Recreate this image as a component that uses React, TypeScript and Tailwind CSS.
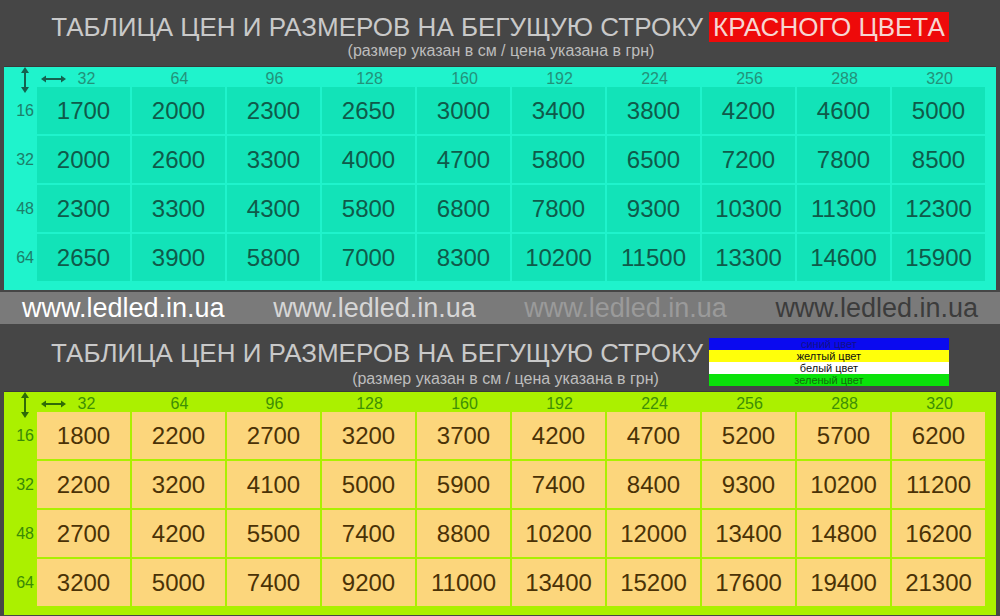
import React from "react";

// column widths (cm) shared by both tables
const WIDTHS = [32, 64, 96, 128, 160, 192, 224, 256, 288, 320];
const HEIGHTS = [16, 32, 48, 64];

const RED_PRICES = [
  [1700, 2000, 2300, 2650, 3000, 3400, 3800, 4200, 4600, 5000],
  [2000, 2600, 3300, 4000, 4700, 5800, 6500, 7200, 7800, 8500],
  [2300, 3300, 4300, 5800, 6800, 7800, 9300, 10300, 11300, 12300],
  [2650, 3900, 5800, 7000, 8300, 10200, 11500, 13300, 14600, 15900],
];

const COLOR_PRICES = [
  [1800, 2200, 2700, 3200, 3700, 4200, 4700, 5200, 5700, 6200],
  [2200, 3200, 4100, 5000, 5900, 7400, 8400, 9300, 10200, 11200],
  [2700, 4200, 5500, 7400, 8800, 10200, 12000, 13400, 14800, 16200],
  [3200, 5000, 7400, 9200, 11000, 13400, 15200, 17600, 19400, 21300],
];

type Theme = {
  outer: string;
  cell: string;
  head: string;
  label: string;
  value: string;
  arrow: string;
};

const CYAN: Theme = {
  outer: "bg-[#1ff3cc]",
  cell: "bg-[#12e3b8]",
  head: "text-[#22927a]",
  label: "text-[#1c7f6a]",
  value: "text-[#0f5a4a]",
  arrow: "#15614f",
};

const LIME: Theme = {
  outer: "bg-[#abf000]",
  cell: "bg-[#fcd67c]",
  head: "text-[#3d8f05]",
  label: "text-[#3a8a06]",
  value: "text-[#4a3206]",
  arrow: "#2f6a08",
};

// small double arrows in the top-left corner
const Arrows = ({ color }: { color: string }) => (
  <div className="relative h-full">
    <svg className="absolute left-[16px] top-[0px]" width="10" height="26" viewBox="0 0 10 26">
      <line x1="5" y1="3" x2="5" y2="23" stroke={color} strokeWidth="2" />
      <path d="M1 6 L5 0 L9 6 Z" fill={color} />
      <path d="M1 20 L5 26 L9 20 Z" fill={color} />
    </svg>
    <svg className="absolute left-[37px] top-[8px]" width="25" height="8" viewBox="0 0 25 8">
      <line x1="3" y1="4" x2="22" y2="4" stroke={color} strokeWidth="2" />
      <path d="M5 0.5 L0 4 L5 7.5 Z" fill={color} />
      <path d="M20 0.5 L25 4 L20 7.5 Z" fill={color} />
    </svg>
  </div>
);

const PriceTable = ({ prices, theme }: { prices: number[][]; theme: Theme }) => (
  <div className="px-[4px]">
    <div className={`${theme.outer} border-t-[1px] border-[#3a3a3a] pr-[7px] pb-[9px]`}>
      <div className="grid grid-cols-[33px_repeat(10,95px)] grid-rows-[18px_repeat(4,47px)] gap-y-[2px]">
        <Arrows color={theme.arrow} />
        {WIDTHS.map((w, i) => (
          <div
            key={w}
            className={`flex items-end justify-center text-[16px] leading-none translate-y-[2px] ${theme.head} ${i === 0 ? "pl-[4px]" : ""}`}
          >
            {w}
          </div>
        ))}
        {prices.map((row, r) => (
          <React.Fragment key={r}>
            <div className={`flex items-center justify-end pr-[3px] text-[16px] ${theme.label}`}>
              {HEIGHTS[r]}
            </div>
            {row.map((p, c) => (
              <div
                key={c}
                className={`${theme.cell} mr-[2px] flex items-center justify-center text-[24px] ${theme.value}`}
              >
                {p}
              </div>
            ))}
          </React.Fragment>
        ))}
      </div>
    </div>
  </div>
);

const TITLE = "ТАБЛИЦА ЦЕН И РАЗМЕРОВ НА БЕГУЩУЮ СТРОКУ";
const SUBTITLE = "(размер указан в см / цена указана в грн)";

const App = () => {
  return (
    <div
      className="w-[1000px] h-[616px] overflow-hidden bg-[#464646]"
      style={{ fontFamily: '"Liberation Sans", Arial, sans-serif' }}
    >
      {/* red colour header */}
      <div className="h-[66px] flex flex-col items-center pt-[12px]">
        <div className="flex items-center text-[26px] leading-[30px] text-[#c9c9c9]">
          <span>{TITLE}</span>
          <span className="ml-[6px] bg-[#ee0a0a] px-[4px] text-[#f6d6d2]">КРАСНОГО ЦВЕТА</span>
        </div>
        <div className="text-[16px] leading-[18px] text-[#bdbdbd] ml-[2px]">{SUBTITLE}</div>
      </div>

      <PriceTable prices={RED_PRICES} theme={CYAN} />

      {/* site band */}
      <div className="mt-[2px] h-[32px] bg-[#7a7a7a] flex items-center justify-between px-[22px] text-[27px] leading-none">
        <span className="text-[#ffffff]">www.ledled.in.ua</span>
        <span className="text-[#d6d6d6]">www.ledled.in.ua</span>
        <span className="text-[#9a9a9a]">www.ledled.in.ua</span>
        <span className="text-[#3c3c3c]">www.ledled.in.ua</span>
      </div>

      {/* colour header */}
      <div className="h-[67px] flex flex-col items-center pt-[14px]">
        <div className="flex items-start">
          <div className="flex flex-col items-end">
            <span className="text-[26px] leading-[30px] text-[#c9c9c9]">{TITLE}</span>
            <span className="mt-[2px] mr-[44px] text-[16px] leading-[18px] text-[#bdbdbd]">{SUBTITLE}</span>
          </div>
          <div className="ml-[6px] w-[240px] flex flex-col text-[11px] leading-[12px] text-center">
            <div className="h-[12px] bg-[#0a0af0] text-[#10108a]">синий цвет</div>
            <div className="h-[12px] bg-[#ffff0a] text-[#111111]">желтый цвет</div>
            <div className="h-[12px] bg-[#ffffff] text-[#111111]">белый цвет</div>
            <div className="h-[12px] bg-[#0ae20a] text-[#10700a]">зеленый цвет</div>
          </div>
        </div>
      </div>

      <PriceTable prices={COLOR_PRICES} theme={LIME} />
    </div>
  );
};

export default App;
